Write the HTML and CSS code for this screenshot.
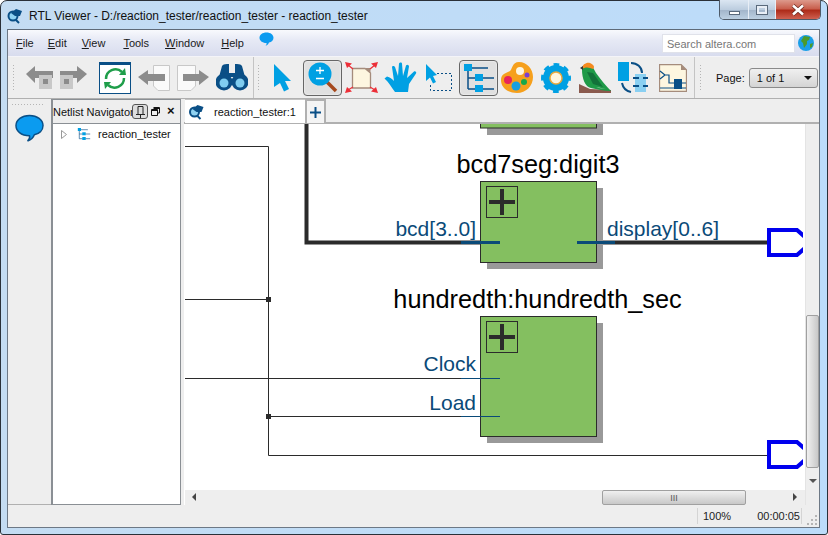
FILE: index.html
```html
<!DOCTYPE html>
<html lang="en">
<head>
    <meta charset="UTF-8">
    <title>RTL Viewer</title>
    <link rel="stylesheet" href="styles.css">
</head>
<body>
<svg class="defs" width="0" height="0">
    <symbol id="logo" viewBox="0 0 16 16">
        <circle cx="6" cy="8" r="4.500" fill="#8fd2f2" stroke="#0a4f86" stroke-width="2"/>
        <path d="M4 5 L9 1 L15 3 L13 8 L8 8 Z" fill="#0a4f86"/>
        <path d="M9 12 L12 15" stroke="#0a4f86" stroke-width="2"/>
    </symbol>
    <symbol id="bubble" viewBox="0 0 30 28">
        <path d="M15 1 C23 1 29 5.500 29 11.500 C29 16.500 25 20 20 21 C19 24 17 26 13 27.500 C15 25.500 15.500 23.500 15 22 C6 22 1 17 1 11.500 C1 5.500 7 1 15 1 Z" fill="#0b9bf0" stroke="#0a4f86" stroke-width="1.500"/>
    </symbol>
    <symbol id="bubble-flat" viewBox="0 0 30 28">
        <path d="M15 1 C23 1 29 5.500 29 11.500 C29 16.500 25 20 20 21 C19 24 17 26 13 27.500 C15 25.500 15.500 23.500 15 22 C6 22 1 17 1 11.500 C1 5.500 7 1 15 1 Z" fill="#0b9bf0"/>
    </symbol>
    <symbol id="tree" viewBox="0 0 30 28">
        <path d="M4 2 V25 M4 14 H12 M4 25 H12 M8 4 H24 M18 14 H30 M18 25 H30" fill="none" stroke="#0a4f86" stroke-width="1.500"/>
        <rect x="0" y="0" width="8" height="7" fill="#00a0e3"/>
        <rect x="11" y="10" width="8" height="7" fill="#00a0e3"/>
        <rect x="11" y="21" width="8" height="7" fill="#00a0e3"/>
    </symbol>
</svg>

<div class="window">
    <div class="titlebar">
        <svg class="title-logo" width="16" height="16"><use href="#logo"/></svg>
        <span class="title-text">RTL Viewer - D:/reaction_tester/reaction_tester - reaction_tester</span>
        <div class="caption">
            <div class="cap-btn cap-min"><i></i></div>
            <div class="cap-btn cap-max"><i></i></div>
            <div class="cap-btn cap-close">
                <svg width="16" height="12" viewBox="0 0 16 12"><path d="M3 1.500 L13 10.500 M13 1.500 L3 10.500" stroke="#6b2a20" stroke-width="4"/><path d="M3 1.500 L13 10.500 M13 1.500 L3 10.500" stroke="#fff" stroke-width="2.500"/></svg>
            </div>
        </div>
    </div>

    <div class="client">
        <div class="menubar">
            <span class="menu menu-file"><u>F</u>ile</span>
            <span class="menu menu-edit"><u>E</u>dit</span>
            <span class="menu menu-view"><u>V</u>iew</span>
            <span class="menu"><u>T</u>ools</span>
            <span class="menu menu-window"><u>W</u>indow</span>
            <span class="menu"><u>H</u>elp</span>
            <svg class="menu-bubble" width="15" height="14"><use href="#bubble-flat"/></svg>
            <div class="search">Search altera.com</div>
            <svg class="globe" width="16" height="16" viewBox="0 0 16 16">
                <circle cx="8" cy="8" r="8" fill="#1b9fe8"/>
                <path d="M6 1 L12 2 L11 5 L9 6 L9 9 L6 13 L5 8 L3 6 Z" fill="#4c9a2a"/>
                <path d="M12 9 L15 8 L14 12 L12 13 Z" fill="#4c9a2a"/>
            </svg>
        </div>

        <div class="toolbar">
            <div class="grip"></div>
            <div class="tool-group tool-group-a">
                <svg class="tool" width="27" height="24" viewBox="0 0 27 24">
                    <path d="M0 8 L9 0 V5 H27 V12 H9 V17 Z" fill="#8c8c8c"/>
                    <rect x="13" y="9" width="13" height="14" fill="#c8c8c8"/>
                    <rect x="17" y="13" width="5" height="5" fill="#8c8c8c"/>
                </svg>
                <svg class="tool" width="27" height="24" viewBox="0 0 27 24">
                    <path d="M27 8 L17 0 V5 H0 V12 H17 V17 Z" fill="#8c8c8c"/>
                    <rect x="0" y="9" width="13" height="14" fill="#c8c8c8"/>
                    <rect x="4" y="13" width="5" height="5" fill="#8c8c8c"/>
                </svg>
                <svg class="tool tool-refresh" width="32" height="32" viewBox="0 0 32 32">
                    <rect x="0.500" y="0.500" width="31" height="31" fill="#fff" stroke="#0a4f86"/>
                    <rect x="0" y="0" width="32" height="3" fill="#0a4f86"/>
                    <path d="M7 17 A9.500 9.500 0 0 1 23 10 M25 16 A9.500 9.500 0 0 1 9 23" fill="none" stroke="#1f9e4a" stroke-width="2.500"/>
                    <path d="M20 13 L27 13 L26 6 Z M12 20 L5 20 L6 27 Z" fill="#1f9e4a"/>
                </svg>
                <svg class="tool" width="32" height="26" viewBox="0 0 32 26">
                    <path d="M15.500 0.500 H31.500 V25.500 H20 L15.500 21 Z" fill="#fafafa" stroke="#c8c8c8"/>
                    <path d="M0 12 L10 5 V9 H27 V16 H10 V20 Z" fill="#8c8c8c"/>
                </svg>
                <svg class="tool" width="32" height="26" viewBox="0 0 32 26">
                    <path d="M0.500 0.500 H18.500 V21 L14 25.500 H0.500 Z" fill="#fafafa" stroke="#c8c8c8"/>
                    <path d="M32 12 L22 5 V9 H6 V16 H22 V20 Z" fill="#8c8c8c"/>
                </svg>
                <svg class="tool" width="32" height="27" viewBox="0 0 32 27">
                    <path d="M3 13 L6 2 Q7 0 11 0 H13 V9 H19 V0 H21 Q25 0 26 2 L29 13 Z" fill="#0a4f86"/>
                    <circle cx="8" cy="18" r="8.500" fill="#0a4f86"/>
                    <circle cx="24" cy="18" r="8.500" fill="#0a4f86"/>
                    <circle cx="8" cy="19" r="4.500" fill="#7fcdf0"/>
                    <circle cx="24" cy="19" r="4.500" fill="#7fcdf0"/>
                </svg>
            </div>
            <div class="sep sep-a"></div>
            <div class="grip"></div>
            <div class="tool-group tool-group-b">
                <svg class="tool" width="20" height="28" viewBox="0 0 20 28">
                    <path d="M1 0 L18 17 L12 17 L16 25 L11 27.500 L7 19 L1 23 Z" fill="#00a0e3"/>
                </svg>
                <div class="tool-on tool-zoom">
                    <svg width="32" height="32" viewBox="0 0 32 32">
                        <path d="M20 20 L29 29" stroke="#a5481c" stroke-width="3.500"/>
                        <circle cx="13" cy="12" r="11.500" fill="#00a0e3"/>
                        <path d="M13 5 V12 M9 8.500 H17 M9 16.500 H17" stroke="#fff" stroke-width="1.300"/>
                    </svg>
                </div>
                <svg class="tool tool-fit" width="33" height="32" viewBox="0 0 33 32">
                    <path d="M7.500 6.500 H20 L25.500 11 V26 H7.500 Z" fill="#fdf6e0" stroke="#a58c7c" stroke-width="1.300"/>
                    <path d="M20 6 L25.500 6 L25.500 11 Z" fill="#a58c7c"/>
                    <path d="M0 0 L7 1.500 L2 6 Z M33 0 L26 1.500 L31 6 Z M0 31 L2 25 L7 29.500 Z M33 31 L31 25 L26 29.500 Z" fill="#ec2f38"/>
                    <path d="M3 3 L8 7 M30 3 L25 7 M3 28 L8 25 M30 28 L25 25" stroke="#ec2f38" stroke-width="1.300"/>
                </svg>
                <svg class="tool tool-hand" width="33" height="31" viewBox="0 0 33 31">
                    <path d="M11 30 C7 25 5 20 0.500 16.500 L3 14.500 C6 15 8 17 10 19 L8 5 C8 3.500 10.500 3.500 11 5 L14 14 L15 1.500 C15.500 0 18 0 18 1.500 L19 14 L22 3.500 C23 2 25 3 25 4.500 L23 16 L30 9.500 C31 8.500 33 10 32 11.500 L25 22 L24 30 Z" fill="#00a0e3"/>
                </svg>
                <svg class="tool tool-sel" width="27" height="27" viewBox="0 0 27 27">
                    <path d="M1 0 L12 11 L8 12 L11 18 L8 19.500 L5 13.500 L1 17 Z" fill="#00a0e3"/>
                    <path d="M12 9.500 H26.500 V26.500 H5.500 V20" fill="none" stroke="#0a4f86" stroke-dasharray="2 2"/>
                </svg>
                <div class="tool-on tool-tree">
                    <svg width="30" height="28" viewBox="0 0 30 28"><use href="#tree"/></svg>
                </div>
                <svg class="tool tool-palette" width="32" height="31" viewBox="0 0 32 31">
                    <path d="M18 0 C26 0 32 7 32 15 C32 24 25 31 16 31 C7 31 0 26 0 18 C0 12 5 11 9 9 C11 8 11 0 18 0 Z" fill="#f6a01c"/>
                    <circle cx="19" cy="9" r="4" fill="#fdf6e0"/>
                    <circle cx="7" cy="18" r="4" fill="#e8255a"/>
                    <circle cx="15" cy="24" r="4.500" fill="#1a9fe0"/>
                    <circle cx="23" cy="20" r="3" fill="#16a84a"/>
                    <circle cx="26" cy="13" r="2.500" fill="#7b3fd0"/>
                </svg>
                <svg class="tool tool-gear" width="30" height="30" viewBox="0 0 30 30">
                    <circle cx="15" cy="15" r="9.500" fill="none" stroke="#00a0e3" stroke-width="7"/>
                    <circle cx="15" cy="15" r="13" fill="none" stroke="#00a0e3" stroke-width="4" stroke-dasharray="5.500 4.710" stroke-dashoffset="2.750"/>
                    <circle cx="15" cy="15" r="6" fill="#fdf6e0" stroke="#e9a93c" stroke-width="1.500"/>
                </svg>
                <svg class="tool tool-bird" width="33" height="31" viewBox="0 0 33 31">
                    <path d="M1 22 L12 27 L33 28 L33 31 H1 Z" fill="#8a5a4e"/>
                    <path d="M4 8 C4 3 9 1 12 2 C15 4 16 8 18 11 C23 18 28 24 33 29 C26 29 19 27 13 26 C7 25 4 16 4 8 Z" fill="#1f9a48"/>
                    <path d="M4 7 C4 2 9 0 12 1 C16 3 17 5 15 7 C11 5 7 5 4 7 Z" fill="#f58a1f"/>
                    <path d="M9 10 L15 11 L25 25 L15 22 Z" fill="#13723a"/>
                    <path d="M18 25 L28 27 L21 26 Z" fill="#d8f0d8"/>
                    <path d="M2 6 L5 4 L5 8 Z" fill="#333"/>
                </svg>
                <svg class="tool tool-seq" width="30" height="31" viewBox="0 0 30 31">
                    <rect x="0" y="0" width="11" height="19" fill="#00a0e3"/>
                    <rect x="17" y="12" width="11" height="18" fill="#8ad0f2"/>
                    <path d="M13 1 C19 1 24 5 24 11 M4 21 C5 26 8 29 13 30" fill="none" stroke="#0a4f86" stroke-width="2"/>
                    <path d="M15 16 H21 M25 16 H30 M15 24 H21 M25 24 H30" stroke="#0a4f86" stroke-width="2"/>
                </svg>
                <svg class="tool tool-schem" width="28" height="28" viewBox="0 0 28 28">
                    <path d="M0.500 0.500 H22 L27.500 6 V27.500 H0.500 Z" fill="#fdf6e0" stroke="#a58c7c" stroke-width="1.300"/>
                    <path d="M22 0.500 L22 6 L27.500 6 Z" fill="#a58c7c"/>
                    <path d="M1 7 L6 11 L1 15 M6 11 H10 V19 H27 M1 24 H27" fill="none" stroke="#0a4f86" stroke-width="1.200"/>
                    <rect x="15" y="15" width="8" height="10" fill="#0a4f86"/>
                </svg>
            </div>
            <div class="sep sep-page"></div>
            <div class="grip"></div>
            <span class="page-label">Page:</span>
            <div class="page-select"><span>1 of 1</span><b></b></div>
        </div>

        <div class="main">
            <div class="dock">
                <div class="dock-grip"></div>
                <svg class="dock-bubble" width="29" height="28"><use href="#bubble"/></svg>
            </div>
            <div class="navigator">
                <div class="nav-head">
                    <span class="nav-title">Netlist Navigator</span>
                    <div class="nav-pin">
                        <svg width="9" height="12" viewBox="0 0 9 12"><path d="M2 0.500 H7 V8.500 H2 Z M0 8.500 H9 M4.500 8.500 V12" fill="none" stroke="#222"/></svg>
                    </div>
                    <svg class="nav-float" width="9" height="9" viewBox="0 0 9 9"><path d="M2.500 0.500 H8.500 V6 H6.500 M0.500 2.500 H6.500 V8.500 H0.500 Z M2.500 1.500 H8.500 M0.500 3.500 H6.500" fill="none" stroke="#111"/></svg>
                    <span class="nav-close">×</span>
                </div>
                <div class="nav-body">
                    <div class="nav-row">
                        <svg class="nav-arrow" width="6" height="9" viewBox="0 0 6 9"><path d="M0.500 0.500 L5.500 4.500 L0.500 8.500 Z" fill="#fff" stroke="#999"/></svg>
                        <svg class="nav-tree" width="14" height="12" viewBox="0 0 30 28"><use href="#tree"/></svg>
                        <span>reaction_tester</span>
                    </div>
                </div>
            </div>
            <div class="workspace">
                <div class="tabs">
                    <div class="tab">
                        <svg width="17" height="16"><use href="#logo"/></svg>
                        <span>reaction_tester:1</span>
                    </div>
                    <div class="tab-add">
                        <svg width="11" height="11" viewBox="0 0 11 11"><path d="M5.500 0 V11 M0 5.500 H11" stroke="#0a4f86" stroke-width="2"/></svg>
                    </div>
                </div>
                <div class="view">
                    <svg class="diagram" width="618" height="366" viewBox="185 124 618 366">
                        <g fill="none" stroke="#2b2b2b">
                            <path d="M185 146.500 H268.500 V455.500 H768"/>
                            <path d="M185 299.500 H268"/>
                            <path d="M185 378.500 H500"/>
                            <path d="M268 416.500 H500"/>
                            <path d="M306.500 124 V242.500 H480 M598 242.500 H768" stroke-width="4"/>
                        </g>
                        <rect x="266" y="297" width="5" height="5" fill="#2b2b2b"/>
                        <rect x="266" y="414" width="5" height="5" fill="#2b2b2b"/>

                        <g class="blocks">
                            <rect x="487" y="124" width="116" height="11" fill="#999"/>
                            <rect x="480.500" y="116" width="116" height="12" fill="#84bf60" stroke="#2b2b2b"/>

                            <rect x="487" y="188" width="116" height="81" fill="#999"/>
                            <rect x="480.500" y="181.500" width="116" height="81" fill="#84bf60" stroke="#2b2b2b"/>
                            <rect x="486.500" y="186.500" width="31" height="31" fill="none" stroke="#2b2b2b"/>
                            <path d="M489 202 H515 M502 189 V215" stroke="#2b2b2b" stroke-width="4"/>

                            <rect x="487" y="323" width="116" height="120" fill="#999"/>
                            <rect x="480.500" y="316.500" width="116" height="120" fill="#84bf60" stroke="#2b2b2b"/>
                            <rect x="486.500" y="321.500" width="31" height="31" fill="none" stroke="#2b2b2b"/>
                            <path d="M489 337 H515 M502 324 V350" stroke="#2b2b2b" stroke-width="4"/>
                        </g>

                        <path d="M461 242.500 H500 M577 242.500 H615" stroke="#0a4a78" stroke-width="3"/>
                        <path d="M461 378.500 H500 M461 416.500 H500" stroke="#0a4a78"/>

                        <text class="inst" x="538" y="173" text-anchor="middle">bcd7seg:digit3</text>
                        <text class="inst" x="537.500" y="308" text-anchor="middle">hundredth:hundredth_sec</text>
                        <text class="port" x="476" y="236" text-anchor="end">bcd[3..0]</text>
                        <text class="port" x="607" y="236">display[0..6]</text>
                        <text class="port" x="476" y="371" text-anchor="end">Clock</text>
                        <text class="port" x="476" y="410" text-anchor="end">Load</text>

                        <path class="pin" d="M805 237 L797 230 H769 V255 H797 L805 248"/>
                        <path class="pin" d="M805 449 L797 442 H769 V467 H797 L805 460"/>
                    </svg>
                    <div class="vscroll">
                        <div class="vthumb"></div>
                        <i class="arrow-down"></i>
                    </div>
                    <div class="hscroll">
                        <i class="arrow-left"></i>
                        <div class="hthumb"><span>III</span></div>
                        <i class="arrow-right"></i>
                    </div>
                </div>
            </div>
        </div>

        <div class="statusbar">
            <span class="st-zoom">100%</span>
            <span class="st-time">00:00:05</span>
            <svg class="st-grip" width="10" height="11" viewBox="0 0 10 11"><path d="M8 1 h2 v2 h-2 Z M4 5 h2 v2 h-2 Z M8 5 h2 v2 h-2 Z M0 9 h2 v2 h-2 Z M4 9 h2 v2 h-2 Z M8 9 h2 v2 h-2 Z" fill="#b5b5b5"/></svg>
        </div>
    </div>
</div>
</body>
</html>
```
FILE: styles.css
```css
* {
    box-sizing: border-box;
}

html, body {
    margin: 0;
    padding: 0;
    height: 100%;
    background: #fff;
    overflow: hidden;
}

body {
    font-family: "Liberation Sans", Arial, sans-serif;
    font-size: 11px;
    color: #111;
}

.defs {
    position: absolute;
}

.window {
    width: 828px;
    height: 535px;
    display: flex;
    flex-direction: column;
    padding: 0 7px 6px 6px;
    border: 1px solid #2a3038;
    border-radius: 7px 7px 3px 3px;
    background: linear-gradient(90deg, #c4dcf2 0%, #c0dcf6 40%, #bcdcfa 100%);
}

.titlebar {
    height: 28px;
    display: flex;
    align-items: center;
    flex: none;
    position: relative;
}

.title-logo {
    margin-top: 1px;
    flex: none;
}

.title-text {
    margin-left: 6px;
    margin-top: 2px;
    font-size: 12px;
    letter-spacing: -0.02px;
    color: #111;
}

.caption {
    position: absolute;
    right: -1px;
    top: -1px;
    display: flex;
    height: 20px;
    border: 1px solid #4e5a68;
    border-top: none;
    border-radius: 0 0 5px 5px;
    overflow: hidden;
}

.cap-btn {
    display: flex;
    align-items: center;
    justify-content: center;
    border-left: 1px solid #e8eef6;
}

.cap-min {
    width: 28px;
    border-left: none;
    background: linear-gradient(#dbe6f2 0%, #bccddf 50%, #a3b6cb 55%, #bcd0e2 100%);
}

.cap-min i {
    width: 11px;
    height: 4px;
    margin-top: 6px;
    background: #fff;
    border: 1px solid #5a6a7c;
}

.cap-max {
    width: 27px;
    background: linear-gradient(#dbe6f2 0%, #bccddf 50%, #a3b6cb 55%, #bcd0e2 100%);
}

.cap-max i {
    width: 12px;
    height: 10px;
    background: transparent;
    border: 1px solid #5a6a7c;
    box-shadow: inset 0 0 0 2px #e8eef6;
}

.cap-close {
    width: 45px;
    background: linear-gradient(#dd9a8c 0%, #c9604e 45%, #ae2c1a 55%, #cf6050 100%);
}

.client {
    flex: 1;
    display: flex;
    flex-direction: column;
    min-height: 0;
    background: #eeeeee;
    border: 1px solid #6d7885;
    border-top: 1px solid #5e6a78;
}

.menubar {
    height: 26px;
    flex: none;
    display: flex;
    align-items: center;
    padding-left: 8px;
    background: linear-gradient(#f8f9fd 0%, #e6e9f5 40%, #d8dcee 100%);
}

.menu {
    margin-right: 16px;
    font-size: 11px;
    color: #1a1a1a;
}

.menu-file {
    margin-right: 14px;
}

.menu-edit {
    margin-right: 15px;
}

.menu-view {
    margin-right: 18px;
}

.menu-window {
    margin-right: 17px;
}

.menu-bubble {
    margin-left: -1px;
    margin-top: -8px;
}

.search {
    margin-left: auto;
    width: 133px;
    height: 19px;
    padding: 3px 4px;
    background: #fff;
    border: 1px solid #e0e2ea;
    color: #777;
    font-size: 11px;
}

.globe {
    margin: 0 5px 0 3px;
}

.toolbar {
    height: 43px;
    flex: none;
    display: flex;
    align-items: center;
    padding-left: 4px;
    border-top: 1px solid #f4f4f8;
    border-bottom: 1px solid #b0b0b0;
    background: #eeeeee;
}

.grip {
    width: 3px;
    height: 28px;
    flex: none;
    background-image: radial-gradient(#b5b5b5 1px, transparent 1px);
    background-size: 3px 3px;
}

.tool-group {
    display: flex;
    align-items: center;
}

.tool {
    display: block;
    flex: none;
}

.tool-group-a {
    margin-left: 11px;
    gap: 7px;
}

.tool-group-a .tool-refresh {
    margin: 0 0 0 5px;
}

.tool-group-b {
    margin-left: 13px;
}

.sep {
    width: 1px;
    height: 41px;
    flex: none;
    background: #c4c4c4;
    margin-right: 3px;
}

.sep-a {
    margin-left: 5px;
}

.sep-page {
    margin-left: 7px;
    margin-right: 4px;
}

.tool-on {
    width: 39px;
    height: 36px;
    flex: none;
    display: flex;
    align-items: center;
    justify-content: center;
    border: 1px solid #666;
    border-radius: 4px;
    background: #e0e0e0;
    box-shadow: inset 0 0 2px #fff;
}

.tool-zoom {
    margin-left: 10px;
}

.tool-fit {
    margin-left: 3px;
}

.tool-hand {
    margin-left: 6px;
}

.tool-sel {
    margin-left: 8px;
}

.tool-tree {
    margin-left: 7px;
}

.tool-palette {
    margin-left: 3px;
}

.tool-gear {
    margin-left: 8px;
}

.tool-bird {
    margin-left: 7px;
}

.tool-seq {
    margin-left: 7px;
}

.tool-schem {
    margin-left: 11px;
}

.page-label {
    margin-left: 14px;
    font-size: 11px;
}

.page-select {
    width: 69px;
    height: 20px;
    margin-left: 4px;
    padding: 0 5px 0 7px;
    display: flex;
    align-items: center;
    justify-content: space-between;
    border: 1px solid #8a8a8a;
    border-radius: 3px;
    background: linear-gradient(#f0f0f0, #d4d4d4);
    font-size: 11px;
}

.page-select b {
    width: 0;
    height: 0;
    border-left: 4px solid transparent;
    border-right: 4px solid transparent;
    border-top: 4px solid #111;
}

.main {
    flex: 1;
    min-height: 0;
    display: flex;
}

.dock {
    width: 43px;
    flex: none;
    border-bottom: 1px solid #b0b0b0;
    padding: 4px 0 0 3px;
}

.dock-grip {
    width: 34px;
    height: 3px;
    background-image: radial-gradient(#b5b5b5 1px, transparent 1px);
    background-size: 3px 3px;
}

.dock-bubble {
    display: block;
    margin: 8px 0 0 4px;
}

.navigator {
    width: 130px;
    flex: none;
    display: flex;
    flex-direction: column;
    border: 1px solid #8a8f94;
    border-left-width: 2px;
}

.nav-head {
    height: 24px;
    flex: none;
    display: flex;
    align-items: center;
    position: relative;
    border-bottom: 1px solid #8a8f94;
}

.nav-title {
    font-size: 11px;
    white-space: nowrap;
}

.nav-pin {
    position: absolute;
    left: 79px;
    top: 4px;
    width: 16px;
    height: 15px;
    display: flex;
    align-items: center;
    justify-content: center;
    border: 1px solid #555;
    border-radius: 3px;
    background: #ddd;
}

.nav-float {
    position: absolute;
    left: 98px;
    top: 7px;
}

.nav-close {
    position: absolute;
    left: 114px;
    top: 3px;
    font-size: 13px;
    font-weight: bold;
    line-height: 16px;
}

.nav-body {
    flex: 1;
    background: #fff;
}

.nav-row {
    height: 20px;
    display: flex;
    align-items: center;
    padding-left: 8px;
    font-size: 11px;
}

.nav-tree {
    margin: 0 7px 0 10px;
}

.workspace {
    flex: 1;
    min-width: 0;
    display: flex;
    flex-direction: column;
    margin-left: 3px;
    background: #fff;
}

.tabs {
    height: 25px;
    flex: none;
    display: flex;
    padding-left: 1px;
    background: #eeeeee;
    border-bottom: 2px solid #b0b0b0;
}

.tab {
    width: 120px;
    height: 24px;
    display: flex;
    align-items: center;
    gap: 9px;
    padding-left: 3px;
    background: #fff;
    border-top: 1px solid #c4c4c4;
    font-size: 11px;
}

.tab-add {
    width: 21px;
    height: 24px;
    display: flex;
    align-items: center;
    justify-content: center;
    border: 2px solid #b0b0b0;
    border-bottom: none;
    background: #f4f4f4;
}

.view {
    flex: 1;
    min-height: 0;
    position: relative;
    background: #fff;
    overflow: hidden;
}

.diagram {
    display: block;
    position: absolute;
    left: 1px;
    top: 0;
}

.inst {
    font-family: "Liberation Sans", sans-serif;
    font-size: 25.300px;
    fill: #000;
}

.port {
    font-family: "Liberation Sans", sans-serif;
    font-size: 21px;
    fill: #0a4a78;
}

.pin {
    fill: none;
    stroke: #0000ee;
    stroke-width: 4;
}

.vscroll {
    position: absolute;
    right: 0;
    top: 0;
    bottom: 0;
    width: 14px;
    background: #eeeeee;
    border-left: 1px solid #e4e4e4;
}

.vthumb {
    position: absolute;
    left: 0;
    top: 191px;
    width: 13px;
    height: 153px;
    border: 1px solid #a0a0a0;
    border-radius: 2px;
    background: linear-gradient(90deg, #f0f0f0, #c8c8c8);
}

.arrow-down {
    position: absolute;
    left: 3px;
    top: 355px;
    width: 0;
    height: 0;
    border-left: 4px solid transparent;
    border-right: 4px solid transparent;
    border-top: 4px solid #555;
}

.hscroll {
    position: absolute;
    left: 1px;
    right: 14px;
    bottom: 0;
    height: 15px;
    background: #eeeeee;
}

.hthumb {
    position: absolute;
    left: 417px;
    top: 0;
    width: 144px;
    height: 15px;
    display: flex;
    align-items: center;
    justify-content: center;
    border: 1px solid #a0a0a0;
    border-radius: 2px;
    background: linear-gradient(#f0f0f0, #c8c8c8);
    font-size: 9px;
    color: #555;
}

.arrow-left {
    position: absolute;
    left: 7px;
    top: 3px;
    border-top: 4px solid transparent;
    border-bottom: 4px solid transparent;
    border-right: 4px solid #444;
}

.arrow-right {
    position: absolute;
    right: 8px;
    top: 3px;
    border-top: 4px solid transparent;
    border-bottom: 4px solid transparent;
    border-left: 4px solid #444;
}

.statusbar {
    height: 22px;
    flex: none;
    display: flex;
    align-items: center;
    justify-content: flex-end;
    position: relative;
    font-size: 11px;
    color: #222;
}

.st-zoom {
    width: 46px;
    height: 16px;
    line-height: 16px;
    padding-left: 5px;
    border-left: 1px solid #d4d4d4;
}

.st-time {
    width: 59px;
    height: 16px;
    line-height: 16px;
    text-align: right;
    padding-right: 1px;
    margin-right: 17px;
    border-right: 1px solid #d4d4d4;
}

.st-grip {
    position: absolute;
    right: 2px;
    bottom: 2px;
}
```
